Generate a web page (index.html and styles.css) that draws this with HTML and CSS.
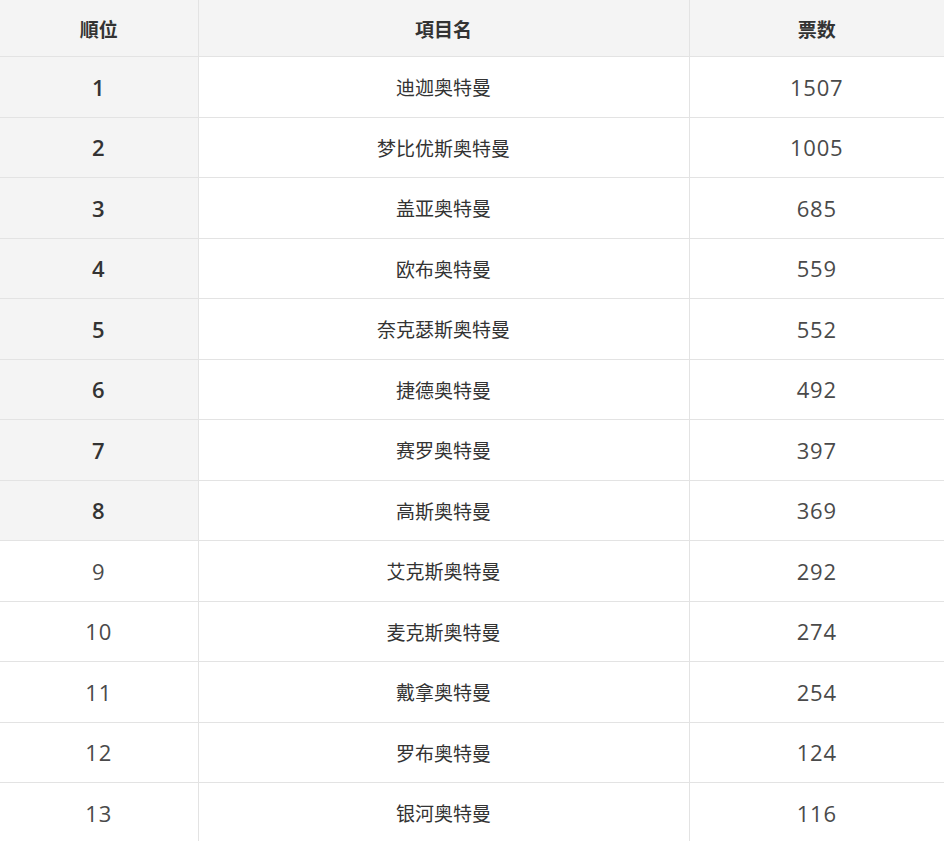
FILE: index.html
```html
<!DOCTYPE html>
<html lang="zh">
<head>
<meta charset="utf-8">
<title>投票排名</title>
<link rel="stylesheet" href="styles.css">
</head>
<body>
<table class="rank">
  <colgroup>
    <col class="c-rank">
    <col class="c-name">
    <col class="c-votes">
  </colgroup>
  <thead>
    <tr><th>順位</th><th>項目名</th><th>票数</th></tr>
  </thead>
  <tbody>
    <tr class="top"><td class="num">1</td><td class="name">迪迦奥特曼</td><td class="votes">1507</td></tr>
    <tr class="top"><td class="num">2</td><td class="name">梦比优斯奥特曼</td><td class="votes">1005</td></tr>
    <tr class="top"><td class="num">3</td><td class="name">盖亚奥特曼</td><td class="votes">685</td></tr>
    <tr class="top"><td class="num">4</td><td class="name">欧布奥特曼</td><td class="votes">559</td></tr>
    <tr class="top"><td class="num">5</td><td class="name">奈克瑟斯奥特曼</td><td class="votes">552</td></tr>
    <tr class="top"><td class="num">6</td><td class="name">捷德奥特曼</td><td class="votes">492</td></tr>
    <tr class="top"><td class="num">7</td><td class="name">赛罗奥特曼</td><td class="votes">397</td></tr>
    <tr class="top"><td class="num">8</td><td class="name">高斯奥特曼</td><td class="votes">369</td></tr>
    <tr><td class="num">9</td><td class="name">艾克斯奥特曼</td><td class="votes">292</td></tr>
    <tr><td class="num">10</td><td class="name">麦克斯奥特曼</td><td class="votes">274</td></tr>
    <tr><td class="num">11</td><td class="name">戴拿奥特曼</td><td class="votes">254</td></tr>
    <tr><td class="num">12</td><td class="name">罗布奥特曼</td><td class="votes">124</td></tr>
    <tr><td class="num">13</td><td class="name">银河奥特曼</td><td class="votes">116</td></tr>
  </tbody>
</table>
</body>
</html>
```
FILE: styles.css
```css
html, body {
  margin: 0;
  padding: 0;
  background: #ffffff;
}
body {
  font-family: "Open Sans", "Noto Sans CJK SC", sans-serif;
  color: #444444;
}
.rank {
  width: 944px;
  border-collapse: collapse;
  table-layout: fixed;
}
.c-rank { width: 198px; }
.c-name { width: 491px; }
.c-votes { width: 255px; }

.rank th,
.rank td {
  padding: 0;
  text-align: center;
  vertical-align: middle;
  border-bottom: 1px solid #e3e3e3;
  border-left: 1px solid #e3e3e3;
}
.rank th:first-child,
.rank td:first-child {
  border-left: none;
}
.rank th {
  height: 56px;
  background: #f4f4f4;
  font-family: "Noto Sans CJK SC", sans-serif;
  font-size: 19px;
  font-weight: 700;
  color: #333333;
}
.rank td {
  height: 59.5px;
}
.num,
.votes {
  font-family: "Open Sans", sans-serif;
  font-size: 22px;
  letter-spacing: 0.8px;
  color: #4a4a4a;
}
.name {
  font-family: "Noto Sans CJK SC", sans-serif;
  font-size: 19px;
  color: #333333;
}
.top .num {
  background: #f4f4f4;
  font-weight: 600;
  color: #333333;
}
```
